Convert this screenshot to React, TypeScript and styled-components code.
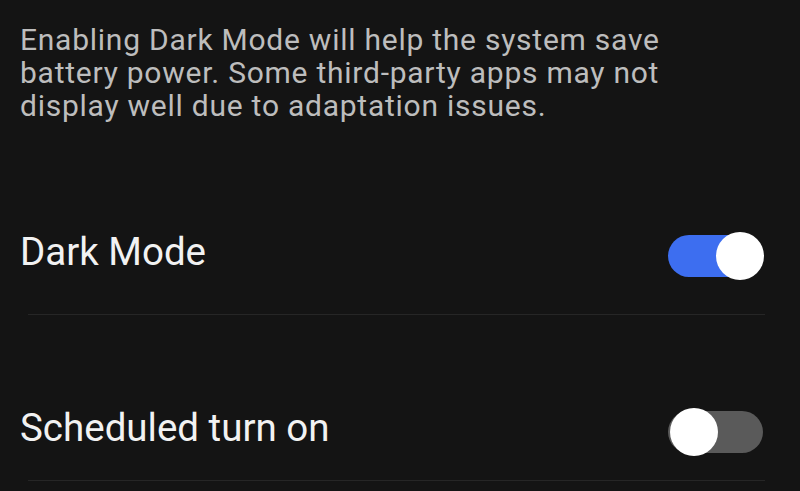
import React from 'react';
import styled, { createGlobalStyle } from 'styled-components';

const GlobalStyle = createGlobalStyle`
  html, body {
    margin: 0;
    padding: 0;
    background: #141414;
  }
  body {
    font-family: Roboto, 'Noto Sans', sans-serif;
  }
`;

const SETTINGS = [
  { id: 'dark', label: 'Dark Mode', on: true },
  { id: 'schedule', label: 'Scheduled turn on', on: false },
];

export default function App() {
  return (
    <>
      <GlobalStyle />
      <Page>
        <Description>
          Enabling Dark Mode will help the system save
          <br />
          battery power. Some third-party apps may not
          <br />
          display well due to adaptation issues.
        </Description>
        <List>
          {SETTINGS.map((item, i) => (
            <React.Fragment key={item.id}>
              <Row first={i === 0}>
                <Label>{item.label}</Label>
                <Toggle on={item.on} role="switch" aria-checked={item.on}>
                  <Knob on={item.on} />
                </Toggle>
              </Row>
              <Divider />
            </React.Fragment>
          ))}
        </List>
      </Page>
    </>
  );
}

const Page = styled.div`
  width: 800px;
  height: 491px;
  overflow: hidden;
  background: #141414;
  box-sizing: border-box;
  padding-top: 23px;
`;

const Description = styled.p`
  margin: 0;
  padding-left: 20px;
  font-size: 30px;
  line-height: 33px;
  letter-spacing: 0.75px;
  color: #bdbdbd;
`;

const List = styled.div`
  margin-top: 113px;
  display: flex;
  flex-direction: column;
`;

const Row = styled.div<{ first: boolean }>`
  display: flex;
  align-items: center;
  justify-content: space-between;
  padding: ${(p) => (p.first ? '0 37px 37px 20px' : '96px 37px 27px 20px')};
`;

const Label = styled.span`
  font-size: 38.5px;
  line-height: 48px;
  margin-top: -8px;
  color: #f2f2f2;
`;

const Divider = styled.div`
  height: 1px;
  margin: 0 35px 0 28px;
  background: #262626;
`;

const Toggle = styled.div<{ on: boolean }>`
  width: 95px;
  height: 42px;
  border-radius: 21px;
  background: ${(p) => (p.on ? '#3d6ef0' : '#5a5a5a')};
  display: flex;
  align-items: center;
  justify-content: ${(p) => (p.on ? 'flex-end' : 'flex-start')};
`;

const Knob = styled.div<{ on: boolean }>`
  width: 48px;
  height: 48px;
  border-radius: 50%;
  background: #ffffff;
  margin: ${(p) => (p.on ? '0 -1px 0 0' : '0 0 0 2px')};
`;
